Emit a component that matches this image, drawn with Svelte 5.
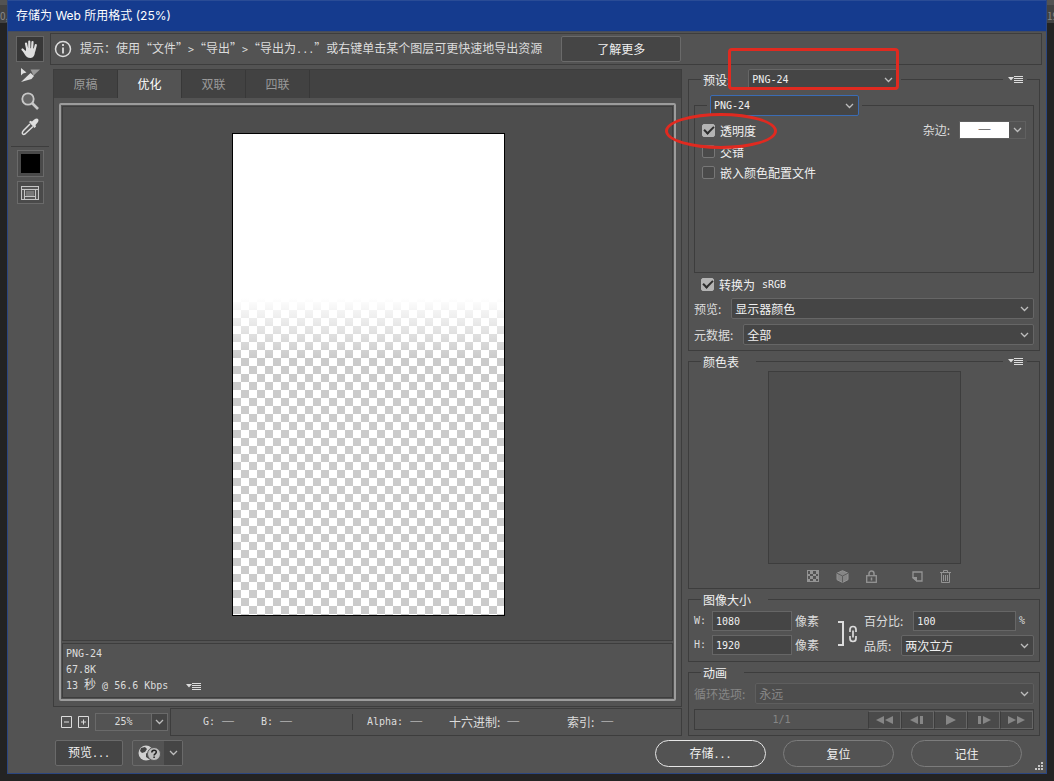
<script>
	let tools = ['hand', 'slice', 'zoom', 'eyedropper'];
	let tabs = ['原稿', '优化', '双联', '四联'];
	let activeTool = $state('hand');
	let activeTab = $state('优化');

	let preset = $state('PNG-24');
	let format = $state('PNG-24');
	let transparency = $state(true);
	let interlaced = $state(false);
	let embedProfile = $state(false);
	let convertSrgb = $state(true);

	let width = $state('1080');
	let height = $state('1920');
	let percent = $state('100');
	let zoom = $state('25%');

	let readouts = [
		{ label: 'G:', mono: true },
		{ label: 'B:', mono: true },
		{ label: 'Alpha:', mono: true },
		{ label: '十六进制:' },
		{ label: '索引:' }
	];

	let playback = [
		{ name: '第一帧', d: 'M8 1v8L0 5zM17 1v8L9 5z' },
		{ name: '上一帧', d: 'M9 1v8L1 5zM11 1h3v8h-3z' },
		{ name: '播放', d: 'M4 0l10 5-10 5z' },
		{ name: '下一帧', d: 'M3 1h3v8H3zM8 1v8l8-4z' },
		{ name: '最后一帧', d: 'M0 1v8l8-4zM9 1v8l8-4z' }
	];
</script>

{#snippet chevron()}
	<svg class="chevron" width="9" height="6" viewBox="0 0 9 6" aria-hidden="true">
		<path d="M1 1l3.5 3.5L8 1" fill="none" stroke="currentColor" stroke-width="1.3" />
	</svg>
{/snippet}

{#snippet menuButton(label)}
	<button class="menu" aria-label={label}>
		<svg width="15" height="9" viewBox="0 0 15 9">
			<path d="M0 2h6L3 5.500z" fill="currentColor" />
			<path d="M6 1.500h9M6 3.500h9M6 5.500h9M6 7.500h9" stroke="currentColor" />
		</svg>
	</button>
{/snippet}

{#snippet toolIcon(name)}
	{#if name === 'hand'}
		<svg width="20" height="20" viewBox="0 0 20 20" aria-hidden="true">
			<g fill="none" stroke="#dedede" stroke-width="2.200" stroke-linecap="round">
				<path d="M6 4.500l1.500 7M9.300 2.500v9M12.500 3l-.5 8M15.800 6l-1.500 6M2.500 10.500l4 4" />
			</g>
			<path d="M6.500 9l8.500.5v2.500c0 4-1.500 7-4.500 7-3 0-4.500-1.500-6-4l-2-3.500 3 1z" fill="#dedede" />
		</svg>
	{:else if name === 'slice'}
		<svg width="20" height="16" viewBox="0 0 20 16" aria-hidden="true">
			<path d="M1 1v7.500l2-2 3.500-1z" fill="#dedede" />
			<path d="M10.500 2.500h9.500L13.500 8.500z" fill="#9a9a9a" />
			<path d="M10.500 6l3.500 3-2.500 3L1 15z" fill="#dedede" />
		</svg>
	{:else if name === 'zoom'}
		<svg width="20" height="20" viewBox="0 0 20 20" aria-hidden="true">
			<circle cx="8" cy="8" r="5.700" fill="#666" stroke="#c8c8c8" stroke-width="1.800" />
			<path d="M12 12l6 6" stroke="#c8c8c8" stroke-width="2.700" />
		</svg>
	{:else}
		<svg width="20" height="20" viewBox="0 0 20 20" aria-hidden="true">
			<path d="M10 7L3.500 13.500c-2 2-1.500 5 1.500 3.500l8-7.500" fill="none" stroke="#dedede" stroke-width="1.500" />
			<path d="M9 5l1.500-1.200 1.500.8C13.500 3 15 1.500 17 1.500c1.500.3 2 2 1 3.500L15.500 8l.5 1.500L14.500 11z" fill="#dedede" />
		</svg>
	{/if}
{/snippet}

<div class="desktop" lang="zh-CN">
	<span class="behind">0,</span>
	<span class="behind end">19</span>
	<div class="window">
		<header class="title">存储为 Web 所用格式 (25%)</header>

		<div class="content">
			<nav class="tools">
				{#each tools as tool}
					<button class="tool" class:active={tool === activeTool} aria-label={tool} onclick={() => (activeTool = tool)}>
						{@render toolIcon(tool)}
					</button>
				{/each}
				<hr />
				<button class="well" aria-label="吸管颜色"><span class="swatch"></span></button>
				<button class="well slices" aria-label="切换切片可视性">
					<svg width="18" height="14" viewBox="0 0 18 14">
						<rect x=".5" y=".5" width="17" height="13" fill="#555" stroke="#c4c4c4" />
						<path d="M1 3.500h16M3.500 4v9M14.500 4v9M4 10.500h10" stroke="#c4c4c4" />
						<rect x="5" y="5" width="8" height="5" fill="#777" />
					</svg>
				</button>
			</nav>

			<div class="workspace">
				<div class="hint">
					<svg width="18" height="18" viewBox="0 0 18 18" aria-hidden="true">
						<circle cx="9" cy="9" r="7.500" fill="none" stroke="#dcdcdc" stroke-width="1.500" />
						<path d="M9 4v2M9 7.500v6" stroke="#dcdcdc" stroke-width="1.800" />
					</svg>
					<p>
						提示：使用“文件”<span class="mono">&gt;</span>“导出”<span class="mono">&gt;</span>“导出为<span class="mono">...</span>”或右键单击某个图层可更快速地导出资源
					</p>
					<button class="flat more">了解更多</button>
				</div>

				<div class="columns">
					<div class="left">
						<section class="preview">
							<div class="tabs" role="tablist">
								{#each tabs as tab}
									<button role="tab" aria-selected={tab === activeTab} class:active={tab === activeTab} onclick={() => (activeTab = tab)}>
										{tab}
									</button>
								{/each}
							</div>
							<div class="frame">
								<div class="canvas">
									<div class="image"></div>
								</div>
								<div class="info mono">
									<div>PNG-24</div>
									<div>67.8K</div>
									<div class="speed">
										<span>13 <span class="cjk">秒</span> @ 56.6 Kbps</span>
										{@render menuButton('下载速度')}
									</div>
								</div>
							</div>
						</section>

						<div class="status">
							<button class="step" aria-label="缩小">
								<svg width="11" height="12" viewBox="0 0 11 12"><path d="M.5.5h10v11H.5z" fill="none" stroke="currentColor" /><path d="M3 6h5" stroke="#999" stroke-width="2" /></svg>
							</button>
							<button class="step" aria-label="放大">
								<svg width="11" height="12" viewBox="0 0 11 12"><path d="M.5.5h10v11H.5z" fill="none" stroke="currentColor" /><path d="M3 6h5M5.500 3.500v5" stroke="currentColor" /></svg>
							</button>
							<div class="combo">
								<input class="mono" aria-label="缩放级别" bind:value={zoom} />
								<button aria-label="选择缩放级别">{@render chevron()}</button>
							</div>
							<div class="readouts">
								{#each readouts as item}
									<div class="readout">
										<span class:mono={item.mono}>{item.label}</span>
										<span>─</span>
									</div>
								{/each}
							</div>
						</div>
					</div>

					<div class="settings">
						<section class="group">
							<div class="head">
								<i class="stub"></i>
								<label class="caption" for="preset">预设:</label>
								<div class="select preset">
									<select id="preset" class="mono" bind:value={preset}><option>PNG-24</option><option>PNG-8</option><option>GIF</option></select>
									{@render chevron()}
								</div>
								<i class="rule"></i>
								{@render menuButton('优化菜单')}
								<i class="stub"></i>
							</div>
							<div class="body">
								<div class="group">
									<div class="head">
										<i class="stub"></i>
										<div class="select format">
											<select class="mono" aria-label="文件格式" bind:value={format}><option>PNG-24</option><option>PNG-8</option><option>GIF</option></select>
											{@render chevron()}
										</div>
										<i class="rule"></i>
									</div>
									<div class="body options">
										<div class="checks">
											<label class="check"><input type="checkbox" bind:checked={transparency} />透明度</label>
											<label class="check"><input type="checkbox" bind:checked={interlaced} />交错</label>
											<label class="check"><input type="checkbox" bind:checked={embedProfile} />嵌入颜色配置文件</label>
										</div>
										<div class="matte">
											<span id="matte">杂边:</span>
											<button aria-labelledby="matte"><span class="color">─</span>{@render chevron()}</button>
										</div>
									</div>
								</div>
								<label class="check srgb"><input type="checkbox" bind:checked={convertSrgb} />转换为<span class="mono">sRGB</span></label>
								<div class="row">
									<label for="profile">预览:</label>
									<div class="select wide">
										<select id="profile"><option>显示器颜色</option></select>
										{@render chevron()}
									</div>
								</div>
								<div class="row">
									<label for="metadata">元数据:</label>
									<div class="select wide">
										<select id="metadata"><option>全部</option><option>无</option></select>
										{@render chevron()}
									</div>
								</div>
							</div>
						</section>

						<section class="group">
							<div class="head">
								<i class="stub"></i>
								<span class="caption spaced">颜色表</span>
								<i class="rule"></i>
								{@render menuButton('颜色表菜单')}
								<i class="stub"></i>
							</div>
							<div class="body palette">
								<div class="colors"></div>
								<div class="actions">
									<button aria-label="映射到透明">
										<svg width="12" height="12" viewBox="0 0 12 12">
											<rect x=".5" y=".5" width="11" height="11" fill="none" stroke="currentColor" />
											<path d="M3 1h3v3H3zM9 1h2v3H9zM1 4h2v2H1zM6 4h3v2H6zM3 6h3v3H3zM9 6h2v3H9zM1 9h2v2H1zM6 9h3v2H6z" fill="currentColor" />
										</svg>
									</button>
									<button aria-label="Web 转换">
										<svg width="13" height="13" viewBox="0 0 13 13">
											<path d="M6.500.7l5.500 2.500v6.500l-5.500 2.800L1 9.700V3.200z" fill="#858585" stroke="currentColor" />
											<path d="M1 3.200L6.500 6 12 3.200M6.500 6v6.500" fill="none" stroke="#5c5c5c" />
										</svg>
									</button>
									<button aria-label="锁定颜色">
										<svg width="11" height="13" viewBox="0 0 11 13">
											<path d="M3 6V3.500a2.500 2.500 0 015 0V6" fill="none" stroke="currentColor" stroke-width="1.500" />
											<rect x=".7" y="5.700" width="9.600" height="6.600" fill="none" stroke="currentColor" stroke-width="1.300" />
											<path d="M5.500 7.500v3" stroke="currentColor" stroke-width="1.500" />
										</svg>
									</button>
									<button class="new" aria-label="新建颜色">
										<svg width="11" height="11" viewBox="0 0 11 11">
											<path d="M1 7V1h9v9H5z" fill="none" stroke="currentColor" stroke-width="1.300" />
											<path d="M0 6h5v5z" fill="currentColor" />
										</svg>
									</button>
									<button aria-label="删除颜色">
										<svg width="11" height="13" viewBox="0 0 11 13">
											<path d="M0 2.500h11M3.500 2.500v-2h4v2M1.500 3v9.500h8V3M3.500 5v6M5.500 5v6M7.500 5v6" fill="none" stroke="currentColor" />
										</svg>
									</button>
								</div>
							</div>
						</section>

						<section class="group">
							<div class="head">
								<i class="stub"></i>
								<span class="caption spaced">图像大小</span>
								<i class="rule"></i>
							</div>
							<div class="body size">
								<div class="stack">
									<div class="field">
										<label class="mono" for="width">W:</label>
										<input id="width" class="mono" bind:value={width} />
										<span>像素</span>
									</div>
									<div class="field">
										<label class="mono" for="height">H:</label>
										<input id="height" class="mono" bind:value={height} />
										<span>像素</span>
									</div>
								</div>
								<svg class="link" width="20" height="26" viewBox="0 0 20 26" aria-hidden="true">
									<path d="M0 1h5v23H0" fill="none" stroke="#dcdcdc" stroke-width="2" />
									<path d="M12 11V8.500a3 3 0 016 0V11M12 15v2.500a3 3 0 006 0V15M15 9.500v7" fill="none" stroke="#dcdcdc" stroke-width="1.700" />
								</svg>
								<div class="stack grow">
									<div class="row">
										<label for="percent">百分比:</label>
										<input id="percent" class="mono" bind:value={percent} />
										<span class="mono unit">%</span>
									</div>
									<div class="row">
										<label for="quality">品质:</label>
										<div class="select wide">
											<select id="quality"><option>两次立方</option><option>两次线性</option></select>
											{@render chevron()}
										</div>
									</div>
								</div>
							</div>
						</section>

						<section class="group">
							<div class="head">
								<i class="stub"></i>
								<span class="caption spaced">动画</span>
								<i class="rule"></i>
							</div>
							<div class="body animation">
								<div class="row off">
									<label for="loop">循环选项:</label>
									<div class="select wide">
										<select id="loop" disabled><option>永远</option><option>一次</option></select>
										{@render chevron()}
									</div>
								</div>
								<div class="player">
									<span class="mono">1/1</span>
									{#each playback as item}
										<button disabled aria-label={item.name}>
											<svg width="17" height="10" viewBox="0 0 17 10"><path d={item.d} fill="currentColor" /></svg>
										</button>
									{/each}
								</div>
							</div>
						</section>

						<div class="mark box"></div>
						<div class="mark oval"></div>
					</div>
				</div>

				<footer>
					<button class="flat browse">预览<span class="mono">...</span></button>
					<button class="flat browser" aria-label="在浏览器中预览">
						<svg width="24" height="16" viewBox="0 0 24 16">
							<circle cx="8" cy="8" r="7.500" fill="#d0d0d0" />
							<path d="M3 3l4-1 2 2-2 3-3 1-2-2zM8 8l4 2-1 4-3-2z" fill="#444" />
							<circle cx="16" cy="9" r="6.500" fill="#bdbdbd" stroke="#555" />
							<path d="M13.800 7.500c0-3 4.500-3 4.500-.4 0 1.700-2.200 1.700-2.200 3.400M16.100 11.500v1.600" fill="none" stroke="#222" stroke-width="1.500" />
						</svg>
						<span>{@render chevron()}</span>
					</button>
					<div class="final">
						<button class="pill primary">存储<span class="mono">...</span></button>
						<button class="pill">复位</button>
						<button class="pill">记住</button>
					</div>
					<svg class="grip" width="9" height="9" viewBox="0 0 9 9" aria-hidden="true">
						<path d="M6 0h2v2H6zM3 3h2v2H3zM6 3h2v2H6zM0 6h2v2H0zM3 6h2v2H3zM6 6h2v2H6z" fill="#c8c8c8" />
					</svg>
				</footer>
			</div>
		</div>
	</div>
</div>

<style>
	:global(body) {
		background: #232323;
	}

	* {
		box-sizing: border-box;
	}

	.desktop {
		position: relative;
		min-height: 100vh;
		padding: 0 7px 7px;
		font: 12px/16px 'Noto Sans CJK SC', sans-serif;
		color: #dcdcdc;
		background: linear-gradient(#535353 5px, #424242 5px 23px, #232323 23px);
	}

	.behind {
		position: absolute;
		left: 0;
		top: 8px;
		width: 7px;
		overflow: hidden;
		font-size: 10px;
		color: #888;
	}

	.end {
		right: 0;
		left: auto;
	}

	button,
	input,
	select {
		margin: 0;
		padding: 0;
		border: 0;
		border-radius: 0;
		background: none;
		font: inherit;
		color: inherit;
		appearance: none;
		outline: none;
	}

	svg {
		display: block;
		flex: none;
	}

	p {
		margin: 0;
	}

	.mono {
		font-family: 'DejaVu Sans Mono', monospace;
		font-size: 10px;
	}

	.cjk {
		font: 12px/12px 'Noto Sans CJK SC', sans-serif;
	}

	.window {
		position: relative;
		border: 1px solid #2b4680;
		border-top: 0;
		background: #535353;
	}

	.title {
		height: 32px;
		padding-left: 8px;
		border-top: 1px solid #2a4c96;
		border-bottom: 1px solid #454c5c;
		background: #153b8e;
		font-family: Inter, 'Noto Sans CJK SC', sans-serif;
		line-height: 30px;
		color: #fff;
	}

	.content {
		display: flex;
		padding-top: 1px;
	}

	.tools {
		display: flex;
		flex-direction: column;
		align-items: center;
		width: 42px;
		padding: 3px 0 0 2px;
	}

	.tool {
		display: grid;
		place-items: center;
		width: 28px;
		height: 26px;
		border: 1px solid transparent;
	}

	.tool.active {
		border-color: #666;
		background: #383838;
	}

	hr {
		width: 38px;
		margin: 6px 0 3px;
		border: 0;
		border-top: 1px solid #3d3d3d;
	}

	.well {
		display: grid;
		place-items: center;
		width: 27px;
		height: 27px;
		border: 1px solid #6a6a6a;
		background: #4a4a4a;
	}

	.slices {
		height: 23px;
		margin-top: 4px;
	}

	.swatch {
		width: 19px;
		height: 19px;
		background: #000;
	}

	.workspace {
		flex: 1;
		min-width: 0;
	}

	.hint {
		display: flex;
		align-items: center;
		height: 32px;
		margin-right: 4px;
		padding-left: 3px;
		border: 1px solid #3d3d3d;
	}

	.hint p {
		margin-left: 8px;
		white-space: nowrap;
	}

	.flat {
		border: 1px solid #6a6a6a;
		border-radius: 2px;
		background: #454545;
		color: #f0f0f0;
	}

	.more {
		width: 120px;
		height: 26px;
		margin-left: 19px;
	}

	.columns {
		display: flex;
		gap: 6px;
		padding: 4px 6px 0 3px;
	}

	.left {
		display: flex;
		flex: 1;
		flex-direction: column;
		min-width: 0;
	}

	.preview {
		display: flex;
		flex: 1;
		flex-direction: column;
		border: 1px solid #3d3d3d;
	}

	.tabs {
		display: flex;
		height: 28px;
		background: #424242;
	}

	.tabs button {
		width: 64px;
		border-right: 1px solid #383838;
		color: #9a9a9a;
	}

	.tabs .active {
		background: #535353;
		color: #fff;
	}

	.frame {
		display: flex;
		flex: 1;
		flex-direction: column;
		gap: 2px;
		margin: 5px;
		padding: 1px;
		border: 2px solid #9c9c9c;
		border-radius: 2px;
	}

	.canvas {
		display: grid;
		flex: 1;
		place-items: center;
		padding: 2px 0 0 2px;
		border: 1px solid #3d3d3d;
		background: #4d4d4d;
	}

	/* white fading out over the transparency grid */
	.image {
		width: 273px;
		height: 483px;
		border: 1px solid #000;
		background:
			linear-gradient(#fff 164px, transparent 224px),
			conic-gradient(#cbcbcb 25%, #fff 0 50%, #cbcbcb 0 75%, #fff 0) 0 0 / 16px 16px;
		background-origin: padding-box;
	}

	.info {
		height: 55px;
		padding: 2px 3px;
		border: 1px solid #3d3d3d;
	}

	.speed {
		display: flex;
		gap: 18px;
	}

	.menu {
		display: grid;
		place-items: center;
		color: #dcdcdc;
	}

	.status {
		display: flex;
		align-items: center;
		height: 28px;
		margin-top: 1px;
		padding-left: 8px;
	}

	.step {
		margin-right: 6px;
	}

	.combo {
		display: flex;
		width: 73px;
		height: 18px;
		border: 1px solid #6a6a6a;
	}

	.combo input {
		width: 55px;
		text-align: center;
	}

	.combo button {
		display: grid;
		flex: 1;
		place-items: center;
		border-left: 1px solid #6a6a6a;
		background: #454545;
	}

	.readouts {
		display: grid;
		flex: 1;
		grid-template-columns: 58px 91px 97px 118px auto;
		align-items: center;
		height: 28px;
		margin-left: 2px;
		padding-left: 32px;
		border: 1px solid #3d3d3d;
	}

	.readout {
		display: flex;
		gap: 7px;
	}

	.readout:nth-child(3) {
		padding-left: 14px;
		border-left: 1px solid #3d3d3d;
	}

	.settings {
		position: relative;
		width: 352px;
	}

	.head {
		position: relative;
		display: flex;
		align-items: center;
		height: 21px;
	}

	.stub,
	.rule {
		height: 1px;
		background: #3d3d3d;
	}

	.stub {
		width: 13px;
	}

	.rule {
		flex: 1;
		margin-left: 3px;
	}

	.caption {
		margin-left: 2px;
		color: #f0f0f0;
	}

	.spaced {
		margin-right: 14px;
	}

	.body {
		margin-top: -11px;
		padding: 10px 5px 5px;
		border: 1px solid #3d3d3d;
		border-top: 0;
	}

	.group > .body:has(.group) {
		padding-top: 16px;
	}

	.select {
		display: grid;
		align-items: center;
		height: 21px;
		border: 1px solid #666;
		border-radius: 2px;
		background: #454545;
		color: #f0f0f0;
	}

	.select select {
		grid-area: 1 / 1;
		height: 19px;
		padding-left: 3px;
	}

	.select .chevron {
		grid-area: 1 / 1;
		justify-self: end;
		margin-right: 4px;
		pointer-events: none;
	}

	.chevron {
		color: #bdbdbd;
	}

	.preset {
		width: 150px;
		margin-left: 18px;
	}

	.format {
		width: 149px;
		margin-left: 3px;
		border-color: #3b6cb4;
	}

	.head .menu {
		margin: 0 4px 0 5px;
	}

	.wide {
		flex: 1;
	}

	.options {
		display: flex;
		justify-content: space-between;
		min-height: 168px;
		padding: 15px 7px 5px;
	}

	.check {
		display: flex;
		align-items: center;
		gap: 5px;
		height: 21px;
		color: #f0f0f0;
	}

	.check input {
		display: grid;
		place-items: center;
		width: 13px;
		height: 13px;
		border: 1px solid #777;
		border-radius: 2px;
		background: #4a4a4a;
	}

	.check input:checked {
		border-color: #b4b4b4;
		background: #b4b4b4;
	}

	.check input:checked::before {
		content: '';
		width: 8px;
		height: 4px;
		margin-bottom: 3px;
		border: solid #2e2e2e;
		border-width: 0 0 2px 2px;
		rotate: -45deg;
	}

	.matte {
		display: flex;
		align-items: center;
		gap: 9px;
		height: 20px;
	}

	.matte button {
		display: flex;
		align-items: center;
		width: 67px;
		height: 18px;
		border: 1px solid #606060;
	}

	.color {
		width: 49px;
		margin-right: 4px;
		background: #fff;
		color: #000;
	}

	.srgb {
		margin: 1px 0 3px 7px;
	}

	.srgb .mono {
		margin-left: 2px;
	}

	.row {
		display: flex;
		align-items: center;
		gap: 10px;
	}

	.row + .row {
		margin-top: 5px;
	}

	.palette {
		display: flex;
		flex-direction: column;
		align-items: center;
		padding-bottom: 0;
	}

	.colors {
		width: 193px;
		height: 193px;
		border: 1px solid #3d3d3d;
		background: #4d4d4d;
	}

	.actions {
		display: flex;
		align-items: center;
		gap: 17px;
		height: 24px;
		padding-left: 30px;
		color: #949494;
	}

	.new {
		margin-left: 18px;
	}

	.size {
		display: flex;
		padding-top: 12px;
	}

	.stack {
		display: flex;
		flex-direction: column;
		gap: 4px;
	}

	.grow {
		flex: 1;
		min-width: 0;
	}

	.stack .row + .row {
		margin: 0;
	}

	.field {
		display: flex;
		align-items: center;
		height: 20px;
	}

	.field label {
		width: 18px;
	}

	.field span {
		margin-left: 3px;
	}

	.size input {
		height: 20px;
		padding-left: 3px;
		border: 1px solid #666;
		background: #454545;
		color: #f0f0f0;
	}

	.field input {
		width: 80px;
	}

	.link {
		align-self: center;
		margin: 0 6px 0 19px;
	}

	.row input {
		flex: 1;
		min-width: 0;
	}

	.unit {
		width: 15px;
		margin-left: -7px;
	}

	.animation {
		padding-top: 11px;
	}

	.off,
	.off .select {
		color: #868686;
	}

	.off .select {
		border-color: #5e5e5e;
		background: #4d4d4d;
	}

	select:disabled {
		opacity: 1;
	}

	.player {
		display: flex;
		align-items: center;
		height: 21px;
		margin-top: 5px;
		border: 1px solid #3d3d3d;
		color: #868686;
	}

	.player span {
		flex: 1;
		text-align: center;
	}

	.player button {
		display: grid;
		place-items: center;
		width: 33px;
		height: 18px;
		border: 1px solid #666;
		border-left-color: #3d3d3d;
		background: #4a4a4a;
	}

	.mark {
		position: absolute;
		border: 3px solid #e02a20;
		pointer-events: none;
	}

	.box {
		left: 40px;
		top: -21px;
		width: 171px;
		height: 42px;
		border-radius: 4px;
	}

	.oval {
		left: -23px;
		top: 44px;
		width: 112px;
		height: 36px;
		border-radius: 50%;
	}

	footer {
		display: flex;
		align-items: flex-start;
		height: 37px;
		padding: 4px 2px 0 5px;
	}

	.browse {
		width: 68px;
		height: 26px;
	}

	.browser {
		display: flex;
		align-items: center;
		width: 51px;
		height: 26px;
		margin-left: 9px;
		padding-left: 5px;
		background: none;
	}

	.browser span {
		display: grid;
		flex: 1;
		place-items: center;
		height: 24px;
		margin-left: 2px;
		background: #454545;
	}

	.final {
		display: flex;
		gap: 17px;
		margin: 0 13px 0 auto;
	}

	.pill {
		width: 111px;
		height: 27px;
		border: 1px solid #7c7c7c;
		border-radius: 14px;
		color: #f0f0f0;
	}

	.primary {
		border-color: #e6e6e6;
	}

	.grip {
		align-self: flex-end;
		margin-bottom: 2px;
	}
</style>
